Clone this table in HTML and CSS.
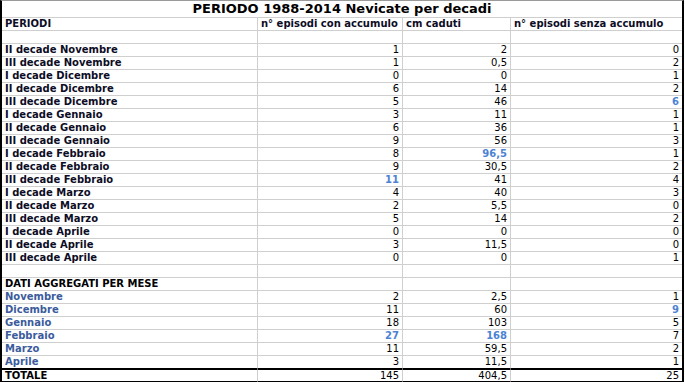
FILE: index.html
```html
<!DOCTYPE html>
<html lang="it">
<head>
<meta charset="utf-8">
<title>PERIODO 1988-2014 Nevicate per decadi</title>
<link rel="stylesheet" href="styles.css">
</head>
<body>
<table class="sheet">
  <colgroup>
    <col class="c1"><col class="c2"><col class="c3"><col class="c4">
  </colgroup>
  <tr class="title-row"><td colspan="4">PERIODO 1988-2014 Nevicate per decadi</td></tr>
  <tr class="head"><td>PERIODI</td><td>n° episodi con accumulo</td><td>cm caduti</td><td>n° episodi senza accumulo</td></tr>
  <tr><td class="lbl"></td><td></td><td></td><td></td></tr>
  <tr><td class="lbl">II decade Novembre</td><td class="n">1</td><td class="n">2</td><td class="n">0</td></tr>
  <tr><td class="lbl">III decade Novembre</td><td class="n">1</td><td class="n">0,5</td><td class="n">2</td></tr>
  <tr><td class="lbl">I decade Dicembre</td><td class="n">0</td><td class="n">0</td><td class="n">1</td></tr>
  <tr><td class="lbl">II decade Dicembre</td><td class="n">6</td><td class="n">14</td><td class="n">2</td></tr>
  <tr><td class="lbl">III decade Dicembre</td><td class="n">5</td><td class="n">46</td><td class="n hi">6</td></tr>
  <tr><td class="lbl">I decade Gennaio</td><td class="n">3</td><td class="n">11</td><td class="n">1</td></tr>
  <tr><td class="lbl">II decade Gennaio</td><td class="n">6</td><td class="n">36</td><td class="n">1</td></tr>
  <tr><td class="lbl">III decade Gennaio</td><td class="n">9</td><td class="n">56</td><td class="n">3</td></tr>
  <tr><td class="lbl">I decade Febbraio</td><td class="n">8</td><td class="n hi">96,5</td><td class="n">1</td></tr>
  <tr><td class="lbl">II decade Febbraio</td><td class="n">9</td><td class="n">30,5</td><td class="n">2</td></tr>
  <tr><td class="lbl">III decade Febbraio</td><td class="n hi">11</td><td class="n">41</td><td class="n">4</td></tr>
  <tr><td class="lbl">I decade Marzo</td><td class="n">4</td><td class="n">40</td><td class="n">3</td></tr>
  <tr><td class="lbl">II decade Marzo</td><td class="n">2</td><td class="n">5,5</td><td class="n">0</td></tr>
  <tr><td class="lbl">III decade Marzo</td><td class="n">5</td><td class="n">14</td><td class="n">2</td></tr>
  <tr><td class="lbl">I decade Aprile</td><td class="n">0</td><td class="n">0</td><td class="n">0</td></tr>
  <tr><td class="lbl">II decade Aprile</td><td class="n">3</td><td class="n">11,5</td><td class="n">0</td></tr>
  <tr><td class="lbl">III decade Aprile</td><td class="n">0</td><td class="n">0</td><td class="n">1</td></tr>
  <tr><td class="lbl"></td><td></td><td></td><td></td></tr>
  <tr><td class="sec">DATI AGGREGATI PER MESE</td><td></td><td></td><td></td></tr>
  <tr><td class="mon">Novembre</td><td class="n">2</td><td class="n">2,5</td><td class="n">1</td></tr>
  <tr><td class="mon">Dicembre</td><td class="n">11</td><td class="n">60</td><td class="n hi">9</td></tr>
  <tr><td class="mon">Gennaio</td><td class="n">18</td><td class="n">103</td><td class="n">5</td></tr>
  <tr><td class="mon">Febbraio</td><td class="n hi">27</td><td class="n hi">168</td><td class="n">7</td></tr>
  <tr><td class="mon">Marzo</td><td class="n">11</td><td class="n">59,5</td><td class="n">2</td></tr>
  <tr class="last"><td class="mon">Aprile</td><td class="n">3</td><td class="n">11,5</td><td class="n">1</td></tr>
  <tr class="total"><td class="sec">TOTALE</td><td class="n">145</td><td class="n">404,5</td><td class="n">25</td></tr>
</table>
</body>
</html>
```

FILE: styles.css
```css
html, body {
  margin: 0;
  padding: 0;
  background: #ffffff;
}

.sheet {
  table-layout: fixed;
  border-collapse: separate;
  border-spacing: 0;
  width: 684px;
  border-top: 1px solid #9a9a9a;
  border-left: 2px solid #000000;
  border-right: 2px solid #000000;
  font-family: "DejaVu Sans", Verdana, sans-serif;
  font-size: 10px;
  color: #000000;
}

.c1 { width: 256px; }
.c2 { width: 145px; }
.c3 { width: 108px; }
.c4 { width: 171px; }

.sheet td {
  height: 12px;
  line-height: 12px;
  padding: 0 3px;
  border-right: 1px solid #cfcfcf;
  border-bottom: 1px solid #cfcfcf;
  white-space: nowrap;
  overflow: hidden;
  vertical-align: middle;
}

.sheet td:last-child {
  border-right: none;
}

.title-row td {
  height: 16px;
  line-height: 16px;
  text-align: center;
  font-weight: bold;
  font-size: 13px;
  color: #000000;
}

.head td {
  font-weight: bold;
  color: #0d0d26;
}

.lbl {
  font-weight: bold;
  color: #0d0d26;
}

.sec {
  font-weight: bold;
  color: #000000;
}

.mon {
  font-weight: bold;
  color: #3b5b9c;
}

.n {
  text-align: right;
}

.n.hi {
  font-weight: bold;
  color: #4d82d4;
}

.last td {
  border-bottom: 1px solid #000000;
}

.total td {
  height: 11px;
  line-height: 11px;
  border-top: 1px solid #000000;
  border-bottom: 1px solid #000000;
}
```
